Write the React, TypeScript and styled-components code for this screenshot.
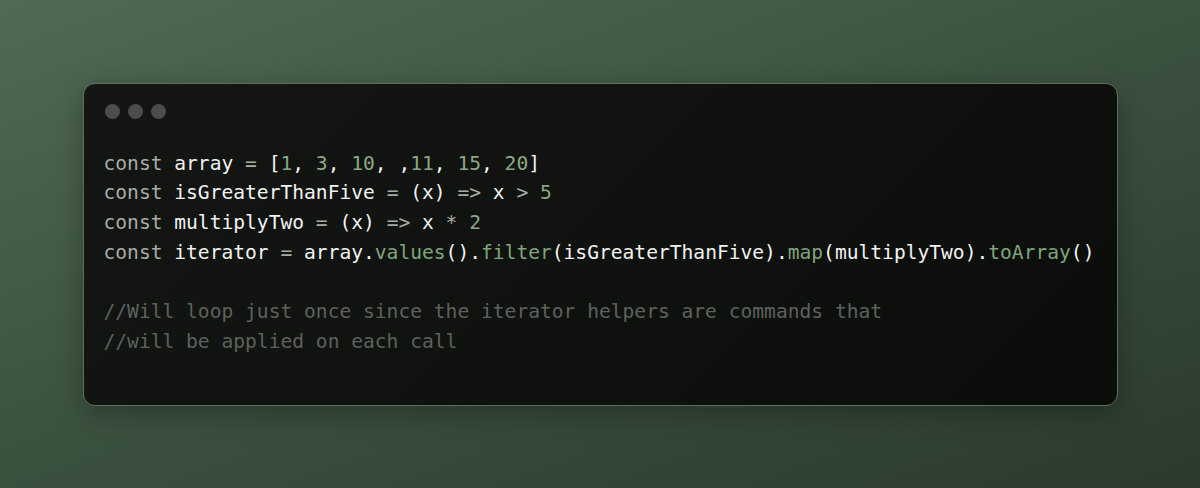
import React from "react";
import styled, { createGlobalStyle } from "styled-components";

const Global = createGlobalStyle`
  html, body { margin: 0; padding: 0; }
  body { width: 1200px; height: 488px; overflow: hidden; }
`;

const Stage = styled.div`
  width: 1200px;
  height: 488px;
  display: flex;
  align-items: center;
  justify-content: center;
  background: linear-gradient(160deg, #506a53 0%, #3d5441 45%, #2a3a2c 100%);
`;

const Window = styled.div`
  box-sizing: border-box;
  width: 1035px;
  height: 323px;
  border-radius: 12px;
  border: 1px solid #5d6e5d;
  background: linear-gradient(135deg, #131613 0%, #0f120f 50%, #0a0d0a 100%);
  box-shadow: 0 8px 28px rgba(0, 0, 0, 0.28);
  padding: 20px 20px;
  display: flex;
  flex-direction: column;
  gap: 30px;
`;

const Dots = styled.div`
  display: flex;
  gap: 8px;
  padding-left: 1px;
`;

const Dot = styled.span`
  width: 15px;
  height: 15px;
  border-radius: 50%;
  background: #4a4d4a;
`;

const Code = styled.pre`
  margin: 0;
  font-family: "DejaVu Sans Mono", "Liberation Mono", monospace;
  font-size: 19.6px;
  line-height: 29.7px;
  color: #f2f2f2;
  white-space: pre;
`;

const Kw = styled.span`color: #a7aca7;`;
const Op = styled.span`color: #a7aca7;`;
const Num = styled.span`color: #8aa886;`;
const Fn = styled.span`color: #7fa57b;`;
const Comment = styled.span`color: #5d615d;`;

export default function App() {
  return (
    <>
      <Global />
      <Stage>
        <Window>
          <Dots>
            <Dot />
            <Dot />
            <Dot />
          </Dots>
          <Code>
            <Kw>const</Kw> array <Op>=</Op> [<Num>1</Num>, <Num>3</Num>, <Num>10</Num>, ,<Num>11</Num>, <Num>15</Num>, <Num>20</Num>]{"\n"}
            <Kw>const</Kw> isGreaterThanFive <Op>=</Op> (x) <Op>=&gt;</Op> x <Op>&gt;</Op> <Num>5</Num>{"\n"}
            <Kw>const</Kw> multiplyTwo <Op>=</Op> (x) <Op>=&gt;</Op> x <Op>*</Op> <Num>2</Num>{"\n"}
            <Kw>const</Kw> iterator <Op>=</Op> array.<Fn>values</Fn>().<Fn>filter</Fn>(isGreaterThanFive).<Fn>map</Fn>(multiplyTwo).<Fn>toArray</Fn>(){"\n"}
            {"\n"}
            <Comment>//Will loop just once since the iterator helpers are commands that</Comment>{"\n"}
            <Comment>//will be applied on each call</Comment>
          </Code>
        </Window>
      </Stage>
    </>
  );
}
